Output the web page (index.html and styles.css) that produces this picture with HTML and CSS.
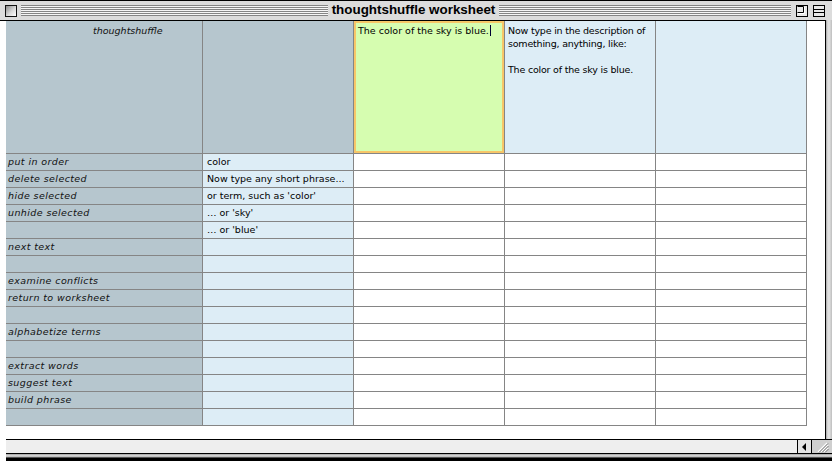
FILE: index.html
```html
<!DOCTYPE html>
<html>
<head>
<meta charset="utf-8">
<link rel="stylesheet" href="styles.css">
</head>
<body>
<div class="window">
  <div class="titlebar">
    <div class="closebox"></div>
    <div class="stripes stripes-left"></div>
    <div class="title">thoughtshuffle worksheet</div>
    <div class="stripes stripes-right"></div>
    <svg class="tbox" width="12" height="12" viewBox="0 0 12 12">
      <rect x="0.5" y="0.5" width="11" height="11" fill="#e8e8e8" stroke="#000"/>
      <path d="M1.5 1.5 H7.5 V7.5 H1.5" fill="none" stroke="#000"/>
      <path d="M2 8.5 H8.5 V2" fill="none" stroke="#fff"/>
    </svg>
    <svg class="tbox" width="12" height="12" viewBox="0 0 12 12">
      <rect x="0.5" y="0.5" width="11" height="11" fill="#e8e8e8" stroke="#000"/>
      <path d="M1 4.5 H11 M1 7.5 H11" fill="none" stroke="#000"/>
    </svg>
  </div>
  <div class="main">
    <div class="pane">
      <div class="sheet">
        <div class="cell gray label head-label">thoughtshuffle</div>
        <div class="cell gray head"></div>
        <div class="cell green head">The color of the sky is blue.<span class="caret"></span></div>
        <div class="cell blue head desc">Now type in the description of<br>something, anything, like:<br><br>The color of the sky is blue.</div>
        <div class="cell blue head"></div>

        <div class="cell gray label">put in order</div><div class="cell blue">color</div><div class="cell"></div><div class="cell"></div><div class="cell"></div>
        <div class="cell gray label">delete selected</div><div class="cell blue">Now type any short phrase...</div><div class="cell"></div><div class="cell"></div><div class="cell"></div>
        <div class="cell gray label">hide selected</div><div class="cell blue">or term, such as 'color'</div><div class="cell"></div><div class="cell"></div><div class="cell"></div>
        <div class="cell gray label">unhide selected</div><div class="cell blue">… or 'sky'</div><div class="cell"></div><div class="cell"></div><div class="cell"></div>
        <div class="cell gray label"></div><div class="cell blue">… or 'blue'</div><div class="cell"></div><div class="cell"></div><div class="cell"></div>
        <div class="cell gray label">next text</div><div class="cell blue"></div><div class="cell"></div><div class="cell"></div><div class="cell"></div>
        <div class="cell gray label"></div><div class="cell blue"></div><div class="cell"></div><div class="cell"></div><div class="cell"></div>
        <div class="cell gray label">examine conflicts</div><div class="cell blue"></div><div class="cell"></div><div class="cell"></div><div class="cell"></div>
        <div class="cell gray label">return to worksheet</div><div class="cell blue"></div><div class="cell"></div><div class="cell"></div><div class="cell"></div>
        <div class="cell gray label"></div><div class="cell blue"></div><div class="cell"></div><div class="cell"></div><div class="cell"></div>
        <div class="cell gray label">alphabetize terms</div><div class="cell blue"></div><div class="cell"></div><div class="cell"></div><div class="cell"></div>
        <div class="cell gray label"></div><div class="cell blue"></div><div class="cell"></div><div class="cell"></div><div class="cell"></div>
        <div class="cell gray label">extract words</div><div class="cell blue"></div><div class="cell"></div><div class="cell"></div><div class="cell"></div>
        <div class="cell gray label">suggest text</div><div class="cell blue"></div><div class="cell"></div><div class="cell"></div><div class="cell"></div>
        <div class="cell gray label">build phrase</div><div class="cell blue"></div><div class="cell"></div><div class="cell"></div><div class="cell"></div>
        <div class="cell gray label"></div><div class="cell blue"></div><div class="cell"></div><div class="cell"></div><div class="cell"></div>
      </div>
    </div>
    <div class="rframe"></div>
  </div>
  <div class="bottom">
    <div class="gap"></div>
    <div class="bottom-right">
      <div class="hscroll">
        <div class="track"></div>
        <div class="arrow"><svg width="5" height="8" viewBox="0 0 5 8"><path d="M4 0 V8 L0 4 Z" fill="#000"/></svg></div>
        <div class="grow">
          <svg width="15" height="14" viewBox="0 0 15 14">
            <path d="M3 12 L12 3 M6 12 L13 5 M9 12 L13 8" stroke="#fff" stroke-width="1.2"/>
            <path d="M4 12.5 L13 3.5 M7 12.5 L13.5 6 M10 12.5 L13.5 9" stroke="#777" stroke-width="1"/>
          </svg>
        </div>
      </div>
      <div class="bframe"></div>
    </div>
  </div>
</div>
</body>
</html>
```

FILE: styles.css
```css
html, body {
  margin: 0;
  padding: 0;
  background: #fff;
}

.window {
  width: 832px;
  height: 461px;
  display: flex;
  flex-direction: column;
  background: #fff;
  overflow: hidden;
}

.titlebar {
  box-sizing: border-box;
  height: 20px;
  border-top: 1px solid #000;
  background: #dcdcdc;
  display: flex;
  align-items: center;
  padding: 0 7px 0 5px;
}

.closebox {
  box-sizing: border-box;
  width: 12px;
  height: 12px;
  border: 1px solid #111;
  background: linear-gradient(135deg, #8a8a8a 0%, #d8d8d8 55%, #ffffff 100%);
  margin-right: 4px;
}

.stripes {
  height: 11px;
  background: repeating-linear-gradient(to bottom, #858585 0 1px, #f6f6f6 1px 2px);
}

.stripes-left {
  width: 307px;
}

.stripes-right {
  width: 292px;
}

.title {
  flex: 1;
  text-align: center;
  font-family: "Liberation Sans", Arial, sans-serif;
  font-weight: bold;
  font-size: 13.4px;
  color: #000;
  padding-bottom: 1px;
  line-height: 18px;
  white-space: nowrap;
}

.tbox {
  display: block;
  margin-left: 5px;
}

.main {
  display: flex;
  height: 419px;
}

.pane {
  box-sizing: border-box;
  width: 826px;
  border-top: 1px solid #000;
  border-right: 1px solid #000;
  background: #fff;
  padding-left: 6px;
}

.rframe {
  flex: 1;
  background: linear-gradient(to right, #9a9a9a 0, #cfcfcf 1px, #e6e6e6 3px, #bdbdbd 6px);
}

.sheet {
  display: grid;
  grid-template-columns: 196px 150px 150px 150px 150px;
  grid-template-rows: 132px repeat(16, 16px);
  gap: 1px;
  background: #858585;
  padding: 0 1px 1px 0;
  width: max-content;
}

.cell {
  background: #fff;
  font-family: "DejaVu Sans", Verdana, sans-serif;
  font-size: 9.5px;
  line-height: 16px;
  color: #000;
  padding: 0 0 0 4px;
  white-space: nowrap;
  overflow: hidden;
}

.gray {
  background: #b6c6ce;
}

.blue {
  background: #ddedf6;
}

.label {
  font-style: italic;
  letter-spacing: 0.4px;
  padding-left: 2px;
  color: #111;
}

.head {
  line-height: 13px;
  padding-top: 3px;
  padding-left: 3px;
}

.desc {
  letter-spacing: -0.2px;
}

.head-label {
  line-height: 13px;
  padding-top: 3px;
  padding-left: 87px;
  letter-spacing: 0;
}

.green {
  box-sizing: border-box;
  background: #d6fdb0;
  border: 2px solid #f7c668;
  padding: 1px 0 0 2px;
}

.caret {
  display: inline-block;
  width: 1px;
  height: 11px;
  background: #000033;
  vertical-align: -2px;
  margin-left: 1px;
}

.bottom {
  flex: 1;
  display: flex;
}

.gap {
  width: 6px;
  background: #fff;
}

.bottom-right {
  flex: 1;
  display: flex;
  flex-direction: column;
}

.hscroll {
  box-sizing: border-box;
  height: 15px;
  border-top: 1px solid #000;
  border-bottom: 1px solid #000;
  display: flex;
  background: #eeeeee;
}

.track {
  flex: 1;
}

.arrow {
  box-sizing: border-box;
  width: 14px;
  border-left: 1px solid #000;
  display: flex;
  align-items: center;
  justify-content: center;
  background: #e4e4e4;
}

.grow {
  box-sizing: border-box;
  width: 21px;
  border-left: 1px solid #000;
  background: #cfcfcf;
  display: flex;
  align-items: center;
  justify-content: center;
}

.bframe {
  flex: 1;
  background: linear-gradient(to bottom, #9a9a9a 0, #c8c8c8 1px, #dcdcdc 2px, #a8a8a8 3px, #000 4px, #000 100%);
}
```
